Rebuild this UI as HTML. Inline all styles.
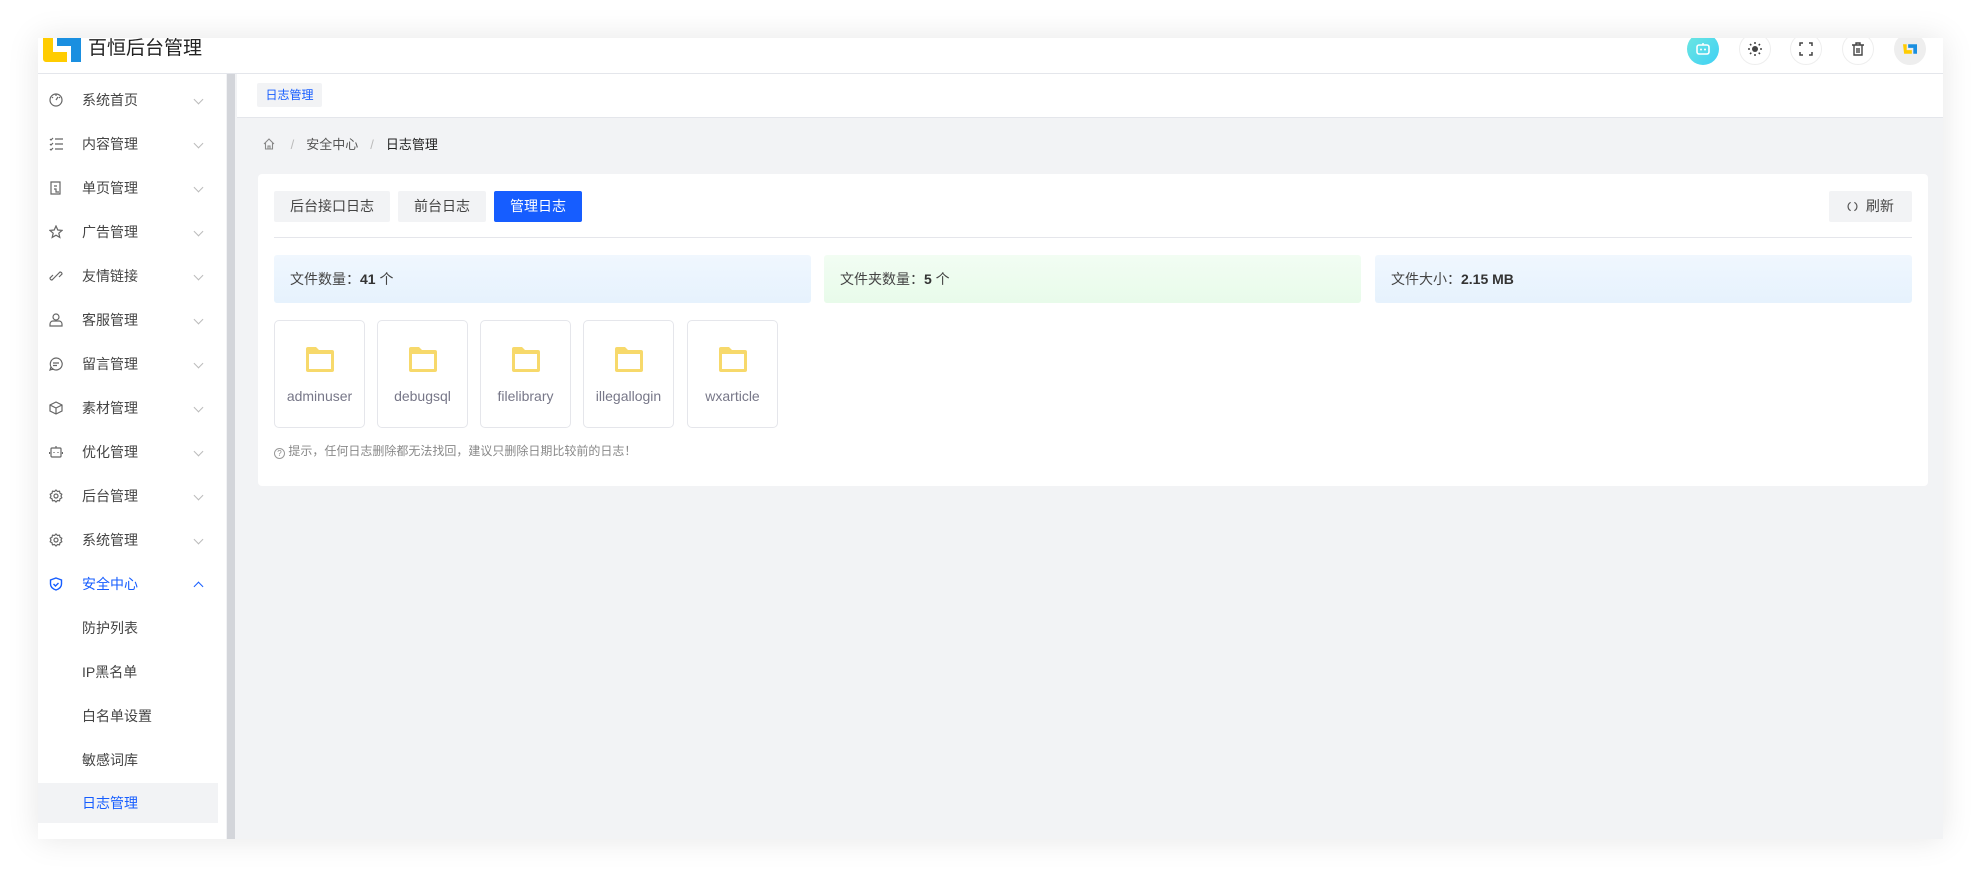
<!DOCTYPE html>
<html><head><meta charset="utf-8"><style>
*{box-sizing:border-box;margin:0;padding:0}
body{width:1981px;height:878px;background:#fff;font-family:"Liberation Sans","Noto Sans CJK SC",sans-serif;position:relative;overflow:hidden;color:#333}
.win{position:absolute;left:38px;top:38px;width:1905px;height:801px;background:#f2f3f5;box-shadow:0 0 30px rgba(0,0,0,0.10);overflow:hidden}
.hdr{position:absolute;left:0;top:0;width:100%;height:36px;background:#fff;border-bottom:1px solid #e4e6eb}
.logo{position:absolute;left:5px;top:-2px}
.title{position:absolute;left:50px;top:-2px;font-size:19px;color:#222;line-height:26px}
.hi{position:absolute;top:-5px;width:32px;height:32px;border-radius:50%;border:1px solid #eee;background:#fff;display:flex;align-items:center;justify-content:center}
.side{position:absolute;left:0;top:36px;width:188px;height:765px;background:#fff}
.sb{position:absolute;left:189px;top:36px;width:8px;height:765px;background:#d3d5da}
.it{position:absolute;left:0;width:188px;height:40px;font-size:14px;color:#444;line-height:40px}
.it .ic{position:absolute;left:11px;top:13px;width:14px;height:14px}
.it .tx{position:absolute;left:44px}
.it .ch{position:absolute;left:157px;top:16px;width:7px;height:7px;border-right:1px solid #bbb;border-bottom:1px solid #bbb;transform:rotate(45deg)}
.tabs{position:absolute;left:199px;top:36px;width:1706px;height:44px;background:#fff;border-bottom:1px solid #e4e6eb}
.card{position:absolute;left:220px;top:136px;width:1670px;height:312px;background:#fff;border-radius:4px}
.btn{position:absolute;top:17px;height:31px;font-size:14px;line-height:31px;text-align:center;background:#f2f3f5;color:#444;border-radius:2px}
.stat{position:absolute;top:81px;height:48px;border-radius:3px;font-size:14px;line-height:48px;padding-left:16px;color:#444}
.stat b{color:#333}
.fc{position:absolute;top:146px;width:91px;height:108px;border:1px solid #e5e6eb;border-radius:5px;text-align:center;font-size:14px;color:#778}
.fc svg{margin-top:25px}
.fc div{margin-top:12px}
</style></head><body>
<div class="win">
 <div class="hdr">
  <svg class="logo" width="38" height="26" viewBox="0 0 38 26"><path d="M0 0h10v16h14v10H3a3 3 0 0 1-3-3z" fill="#ffcc00"/><path d="M14 0h24v26H28V10H14z" fill="#1a8fe0"/></svg>
  <div class="title">百恒后台管理</div>
  <div class="hi" style="left:1649px;background:linear-gradient(135deg,#6ee7e0,#3fd0f5);border:none"><svg width="16" height="16" viewBox="0 0 16 16"><rect x="2" y="4" width="12" height="9" rx="2" fill="none" stroke="#fff" stroke-width="1.6"/><circle cx="6" cy="8.5" r="1" fill="#fff"/><circle cx="10" cy="8.5" r="1" fill="#fff"/><path d="M8 4V2" stroke="#fff" stroke-width="1.5"/></svg></div>
  <div class="hi" style="left:1701px"><svg width="14" height="14" viewBox="0 0 14 14"><circle cx="7" cy="7" r="3" fill="#444"/><g stroke="#444" stroke-width="1.5"><path d="M7 0v2M7 12v2M0 7h2M12 7h2M2 2l1.3 1.3M10.7 10.7L12 12M2 12l1.3-1.3M10.7 3.3L12 2"/></g></svg></div>
  <div class="hi" style="left:1752px"><svg width="14" height="14" viewBox="0 0 14 14" fill="none" stroke="#444" stroke-width="1.5"><path d="M1 4V1h3M10 1h3v3M13 10v3h-3M4 13H1v-3"/></svg></div>
  <div class="hi" style="left:1804px"><svg width="14" height="14" viewBox="0 0 14 14" fill="none" stroke="#444" stroke-width="1.4"><path d="M1 3h12M5 3V1h4v2M3 3v10h8V3M6 6v5M8 6v5"/></svg></div>
  <div class="hi" style="left:1856px;background:#eee"><svg width="14" height="14" viewBox="0 0 38 26"><path d="M0 0h10v16h14v10H3z" fill="#ffcc00"/><path d="M14 0h24v26H28V10H14z" fill="#1a8fe0"/></svg></div>
 </div>
 <div class="side">
  <div class="it" style="top:6px"><svg class="ic" viewBox="0 0 14 14" fill="none" stroke="#666" stroke-width="1.2"><circle cx="7" cy="7" r="6"/><path d="M7 7l2-3M7 1v2M3 4l1 1M11 4l-1 1"/></svg><span class="tx">系统首页</span><i class="ch"></i></div>
  <div class="it" style="top:50px"><svg class="ic" viewBox="0 0 14 14" fill="none" stroke="#666" stroke-width="1.2"><path d="M6 2h8M6 7h8M6 12h8M1 2l1 1 2-2M1 7l1 1 2-2M1 12l1 1 2-2"/></svg><span class="tx">内容管理</span><i class="ch"></i></div>
  <div class="it" style="top:94px"><svg class="ic" viewBox="0 0 14 14" fill="none" stroke="#666" stroke-width="1.2"><path d="M2 1h9v12H2zM5 5h3M5 8h2v3h3"/></svg><span class="tx">单页管理</span><i class="ch"></i></div>
  <div class="it" style="top:138px"><svg class="ic" viewBox="0 0 14 14" fill="none" stroke="#666" stroke-width="1.2"><path d="M7 1l1.8 4 4.2.4-3.2 2.8 1 4.2L7 10.2 3.2 12.4l1-4.2L1 5.4 5.2 5z"/></svg><span class="tx">广告管理</span><i class="ch"></i></div>
  <div class="it" style="top:182px"><svg class="ic" viewBox="0 0 14 14" fill="none" stroke="#666" stroke-width="1.2"><path d="M6 8l-3 3a2 2 0 0 1-2-2l3-3M8 6l3-3a2 2 0 0 1 2 2l-3 3M5 9l4-4"/></svg><span class="tx">友情链接</span><i class="ch"></i></div>
  <div class="it" style="top:226px"><svg class="ic" viewBox="0 0 14 14" fill="none" stroke="#666" stroke-width="1.2"><circle cx="7" cy="4" r="3"/><path d="M1 13v-2a3 3 0 0 1 3-3h6a3 3 0 0 1 3 3v2z"/></svg><span class="tx">客服管理</span><i class="ch"></i></div>
  <div class="it" style="top:270px"><svg class="ic" viewBox="0 0 14 14" fill="none" stroke="#666" stroke-width="1.2"><path d="M7 1a6 6 0 1 1-5 9l-1 3 3-1A6 6 0 0 1 7 1zM4 6h6M4 8.5h4"/></svg><span class="tx">留言管理</span><i class="ch"></i></div>
  <div class="it" style="top:314px"><svg class="ic" viewBox="0 0 14 14" fill="none" stroke="#666" stroke-width="1.2"><path d="M7 1l6 3v6l-6 3-6-3V4zM1 4l6 3 6-3M7 7v6"/></svg><span class="tx">素材管理</span><i class="ch"></i></div>
  <div class="it" style="top:358px"><svg class="ic" viewBox="0 0 14 14" fill="none" stroke="#666" stroke-width="1.2"><rect x="2" y="3" width="10" height="9" rx="1"/><path d="M0.5 7v2M13.5 7v2M5 7v1M9 7v1M7 1v2"/></svg><span class="tx">优化管理</span><i class="ch"></i></div>
  <div class="it" style="top:402px"><svg class="ic" viewBox="0 0 14 14" fill="none" stroke="#666" stroke-width="1.2"><circle cx="7" cy="7" r="2"/><path d="M7 1l1.5 1.5 2-.3.5 2 1.8 1L12 7l.8 1.8-1.8 1-.5 2-2-.3L7 13l-1.5-1.5-2 .3-.5-2-1.8-1L2 7l-.8-1.8 1.8-1 .5-2 2 .3z"/></svg><span class="tx">后台管理</span><i class="ch"></i></div>
  <div class="it" style="top:446px"><svg class="ic" viewBox="0 0 14 14" fill="none" stroke="#666" stroke-width="1.2"><circle cx="7" cy="7" r="2"/><path d="M7 1l1.5 1.5 2-.3.5 2 1.8 1L12 7l.8 1.8-1.8 1-.5 2-2-.3L7 13l-1.5-1.5-2 .3-.5-2-1.8-1L2 7l-.8-1.8 1.8-1 .5-2 2 .3z"/></svg><span class="tx">系统管理</span><i class="ch"></i></div>
  <div class="it" style="top:490px;color:#165dff"><svg class="ic" viewBox="0 0 14 14" fill="none" stroke="#165dff" stroke-width="1.4"><path d="M7 1l5.5 2v4c0 3-2.5 5-5.5 6C4 12 1.5 10 1.5 7V3zM4.5 7l2 2 3-3"/></svg><span class="tx">安全中心</span><i class="ch" style="top:19px;border-color:#165dff;transform:rotate(225deg)"></i></div>
  <div class="it" style="top:534px"><span class="tx">防护列表</span></div>
  <div class="it" style="top:578px"><span class="tx">IP黑名单</span></div>
  <div class="it" style="top:622px"><span class="tx">白名单设置</span></div>
  <div class="it" style="top:666px"><span class="tx">敏感词库</span></div>
  <div class="it" style="top:709px;width:180px;background:#f2f3f5;color:#165dff"><span class="tx">日志管理</span></div>
 </div>
 <div class="sb"></div>
 <div class="tabs"><div style="position:absolute;left:20px;top:9px;width:65px;height:24px;background:#f2f3f5;border-radius:2px;color:#165dff;font-size:12px;line-height:24px;text-align:center">日志管理</div></div>
 <div style="position:absolute;left:225px;top:99px;font-size:13px;line-height:16px;color:#555;white-space:nowrap">
  <svg width="12" height="12" viewBox="0 0 12 12" fill="none" stroke="#888" stroke-width="1.1" style="vertical-align:-1px"><path d="M1 6l5-5 5 5M2.5 5v6h7V5M5 11V8h2v3"/></svg>
  <span style="color:#bbb;margin:0 12px">/</span>安全中心<span style="color:#bbb;margin:0 12px">/</span><span style="color:#222">日志管理</span></div>
 <div class="card">
  <div class="btn" style="left:16px;width:116px">后台接口日志</div>
  <div class="btn" style="left:140px;width:88px">前台日志</div>
  <div class="btn" style="left:236px;width:88px;background:#165dff;color:#fff">管理日志</div>
  <div class="btn" style="left:1571px;width:83px"><svg width="11" height="11" viewBox="0 0 12 12" fill="none" stroke="#555" stroke-width="1.3" style="vertical-align:-1px"><path d="M4 1.5A5 5 0 0 0 4 10.5M8 1.5A5 5 0 0 1 8 10.5"/></svg>&nbsp; 刷新</div>
  <div style="position:absolute;left:16px;top:63px;width:1638px;height:1px;background:#e5e6eb"></div>
  <div class="stat" style="left:16px;width:537px;background:linear-gradient(180deg,#f0f7fe,#e6f2fd)">文件数量：<b>41</b> 个</div>
  <div class="stat" style="left:566px;width:537px;background:linear-gradient(180deg,#f2fdf3,#e8fbea)">文件夹数量：<b>5</b> 个</div>
  <div class="stat" style="left:1117px;width:537px;background:linear-gradient(180deg,#f0f7fe,#e6f2fd)">文件大小：<b>2.15 MB</b></div>
  <div class="fc" style="left:16px"><svg width="30" height="27" viewBox="0 0 30 27"><path d="M1 3a2 2 0 0 1 2-2h8l3 3h13a2 2 0 0 1 2 2v18a2 2 0 0 1-2 2H3a2 2 0 0 1-2-2z" fill="#f7d96b"/><rect x="4" y="8" width="22" height="15" fill="#fff"/></svg><div>adminuser</div></div>
  <div class="fc" style="left:119px"><svg width="30" height="27" viewBox="0 0 30 27"><path d="M1 3a2 2 0 0 1 2-2h8l3 3h13a2 2 0 0 1 2 2v18a2 2 0 0 1-2 2H3a2 2 0 0 1-2-2z" fill="#f7d96b"/><rect x="4" y="8" width="22" height="15" fill="#fff"/></svg><div>debugsql</div></div>
  <div class="fc" style="left:222px"><svg width="30" height="27" viewBox="0 0 30 27"><path d="M1 3a2 2 0 0 1 2-2h8l3 3h13a2 2 0 0 1 2 2v18a2 2 0 0 1-2 2H3a2 2 0 0 1-2-2z" fill="#f7d96b"/><rect x="4" y="8" width="22" height="15" fill="#fff"/></svg><div>filelibrary</div></div>
  <div class="fc" style="left:325px"><svg width="30" height="27" viewBox="0 0 30 27"><path d="M1 3a2 2 0 0 1 2-2h8l3 3h13a2 2 0 0 1 2 2v18a2 2 0 0 1-2 2H3a2 2 0 0 1-2-2z" fill="#f7d96b"/><rect x="4" y="8" width="22" height="15" fill="#fff"/></svg><div>illegallogin</div></div>
  <div class="fc" style="left:429px"><svg width="30" height="27" viewBox="0 0 30 27"><path d="M1 3a2 2 0 0 1 2-2h8l3 3h13a2 2 0 0 1 2 2v18a2 2 0 0 1-2 2H3a2 2 0 0 1-2-2z" fill="#f7d96b"/><rect x="4" y="8" width="22" height="15" fill="#fff"/></svg><div>wxarticle</div></div>
  <div style="position:absolute;left:16px;top:270px;font-size:12px;color:#888;line-height:14px"><span style="display:inline-block;width:11px;height:11px;border:1px solid #999;border-radius:50%;font-size:8px;line-height:9px;text-align:center;vertical-align:-1px">?</span> 提示，任何日志删除都无法找回，建议只删除日期比较前的日志！</div>
 </div>
</div>
</body></html>
